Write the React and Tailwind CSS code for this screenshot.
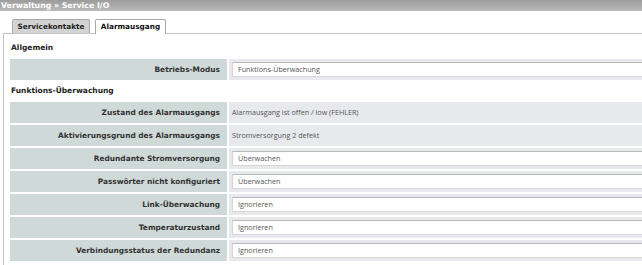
const ALLGEMEIN = [
  { label: 'Betriebs-Modus', value: 'Funktions-Überwachung', input: true },
]

const UEBERWACHUNG = [
  { label: 'Zustand des Alarmausgangs', value: 'Alarmausgang ist offen / low (FEHLER)' },
  { label: 'Aktivierungsgrund des Alarmausgangs', value: 'Stromversorgung 2 defekt' },
  { label: 'Redundante Stromversorgung', value: 'Überwachen', input: true },
  { label: 'Passwörter nicht konfiguriert', value: 'Überwachen', input: true },
  { label: 'Link-Überwachung', value: 'Ignorieren', input: true },
  { label: 'Temperaturzustand', value: 'Ignorieren', input: true },
  { label: 'Verbindungsstatus der Redundanz', value: 'Ignorieren', input: true },
]

export default function App() {
  return (
    <div className="h-[265px] w-[642px] overflow-hidden bg-white font-['DejaVu_Sans',sans-serif] text-[#333]">
      <div className="h-[11px] bg-gradient-to-b from-[#9c9c9c] to-[#bababa] pl-[1px] text-[7.8px] font-bold leading-[11px] text-white">
        Verwaltung » Service I/O
      </div>

      <div className="flex items-end gap-[5px] pl-[12px] pt-[8px]">
        <div className="h-[14px] w-[78px] rounded-t-[2px] border border-b-0 border-[#a8a8a8] bg-[#d3d3d3] text-center text-[7.3px] font-bold leading-[13px] text-[#222]">
          Servicekontakte
        </div>
        <div className="relative z-10 -mb-px h-[15px] w-[71px] rounded-t-[2px] border border-b-0 border-[#a8a8a8] bg-white text-center text-[7.3px] font-bold leading-[13px] text-[#111]">
          Alarmausgang
        </div>
      </div>

      <div className="ml-[3px] h-[240px] border-l border-t border-[#c4c4c4] pl-[6px] pt-[6px]">
        <Section title="Allgemein" rows={ALLGEMEIN} />
        <div className="h-[3px]" />
        <Section title="Funktions-Überwachung" rows={UEBERWACHUNG} />
      </div>
    </div>
  )
}

function Section({ title, rows }) {
  return (
    <div>
      <h2 className="mb-[3px] h-[16px] pl-[1px] text-[7.5px] font-bold leading-[16px] text-[#222]">{title}</h2>
      <div className="flex flex-col gap-[2px]">
        {rows.map((row) => (
          <Row key={row.label} {...row} />
        ))}
      </div>
    </div>
  )
}

function Row({ label, value, input }) {
  return (
    <div className="flex h-[21px] gap-[2px]">
      <div className="flex w-[217px] shrink-0 items-center justify-end bg-[#cfd9d7] pr-[7px] text-[7.4px] font-bold text-[#333]">
        {label}
      </div>
      <div className="flex flex-1 items-center bg-[#e7e9ec] pl-[3px] font-['Open_Sans',sans-serif] text-[7.2px] text-[#555]">
        {input ? (
          <div className="flex h-[15px] w-full items-center border border-r-0 border-[#d6d6d6] border-t-[#b9b9b9] bg-white pl-[5px]">
            {value}
          </div>
        ) : (
          <span>{value}</span>
        )}
      </div>
    </div>
  )
}
